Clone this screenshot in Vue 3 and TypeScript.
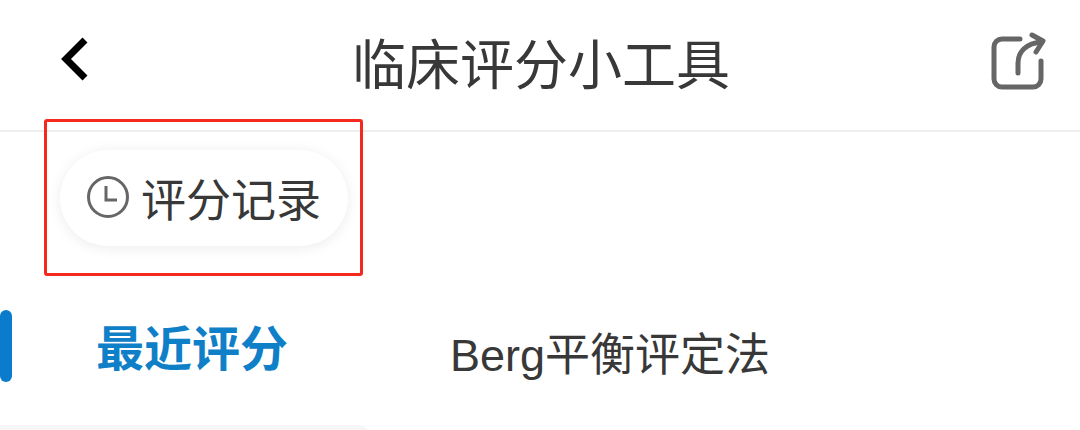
<template>
  <div class="page">
    <header class="top-bar">
      <button class="icon-btn back-btn" aria-label="返回">
        <svg width="50" height="60" viewBox="0 0 50 60" fill="none" stroke="#000" stroke-width="7">
          <path d="M35 10 16 29 35 48" />
        </svg>
      </button>
      <h1 class="title">{{ title }}</h1>
      <button class="icon-btn share-btn" aria-label="分享">
        <svg width="60" height="60" viewBox="0 0 60 60" fill="none" stroke="#666" stroke-width="5" stroke-linecap="round" stroke-linejoin="round">
          <path d="M32 7H14a8 8 0 0 0-8 8v32a8 8 0 0 0 8 8h31a8 8 0 0 0 8-8V29" />
          <path d="M30 41V31C30 20 38 11 54 10" />
          <path d="M44 3 55 9 48 20" />
        </svg>
      </button>
    </header>

    <div class="history-row">
      <button class="history-pill">
        <svg class="clock" width="44" height="44" viewBox="0 0 44 44" fill="none" stroke="#666" stroke-width="3">
          <circle cx="22" cy="22" r="19.5" />
          <path d="M20 11v14h11" />
        </svg>
        <span class="pill-label">评分记录</span>
      </button>
      <div class="highlight-box"></div>
    </div>

    <div class="content">
      <aside class="side">
        <div
          v-for="tab in tabs"
          :key="tab"
          class="tab"
          :class="{ active: tab === activeTab }"
        >
          <span>{{ tab }}</span>
        </div>
      </aside>
      <main class="list">
        <div v-for="item in items" :key="item" class="list-item">{{ item }}</div>
      </main>
    </div>
  </div>
</template>

<script setup lang="ts">
import { ref } from 'vue';

const title = '临床评分小工具';
const tabs = ['最近评分', ''];
const activeTab = ref('最近评分');
const items = ['Berg平衡评定法'];
</script>

<style>
html,
body {
  margin: 0;
  background: #fff;
  overflow: hidden;
}
</style>

<style scoped>
.page {
  width: 1080px;
  height: 430px;
  overflow: hidden;
  font-family: "Liberation Sans", "Noto Sans CJK SC", sans-serif;
  color: #383838;
}

.top-bar {
  display: flex;
  align-items: center;
  justify-content: space-between;
  height: 130px;
  padding: 0 32px 0 50px;
  border-bottom: 2px solid #eeeeee;
}

.icon-btn {
  display: flex;
  border: 0;
  background: none;
}

.back-btn {
  padding: 0 0 10px;
}

.share-btn {
  padding: 0 0 6px;
}

.title {
  margin: 0 0 0 -6px;
  padding-top: 2px;
  font-size: 54px;
  font-weight: 400;
  line-height: 60px;
}

.history-row {
  position: relative;
  padding: 18px 0 0 60px;
  height: 160px;
  box-sizing: border-box;
}

.history-pill {
  display: flex;
  align-items: center;
  gap: 11px;
  width: 288px;
  height: 96px;
  padding: 0 0 0 26px;
  box-sizing: border-box;
  border: 0;
  border-radius: 48px;
  background: #fff;
  box-shadow: 0 2px 14px rgba(0, 0, 0, 0.08);
  font-family: inherit;
  font-size: 45px;
  color: #383838;
}

.clock {
  margin-bottom: 2px;
}

.pill-label {
  margin-bottom: 2px;
}

.highlight-box {
  position: absolute;
  left: 44px;
  top: -13px;
  width: 319px;
  height: 157px;
  box-sizing: border-box;
  border: 3px solid #f5281e;
  border-radius: 3px;
}

.content {
  display: flex;
  margin-top: 18px;
}

.side {
  width: 370px;
  flex-shrink: 0;
}

.tab {
  position: relative;
  height: 72px;
  padding-left: 96px;
  line-height: 72px;
  font-size: 48px;
  color: #383838;
  margin-bottom: 43px;
  background: #f6f6f6;
  border-radius: 0 12px 0 0;
}

.tab span {
  position: relative;
  top: 4px;
}

.tab.active {
  background: none;
  color: #0f80c8;
  font-weight: 700;
}

.tab.active::before {
  content: "";
  position: absolute;
  left: 0;
  top: 0;
  width: 12px;
  height: 72px;
  border-radius: 6px;
  background: #0a7ccb;
}

.list {
  flex: 1;
}

.list-item {
  padding-left: 80px;
  height: 72px;
  line-height: 72px;
  font-size: 45px;
  margin-top: 10px;
}
</style>
